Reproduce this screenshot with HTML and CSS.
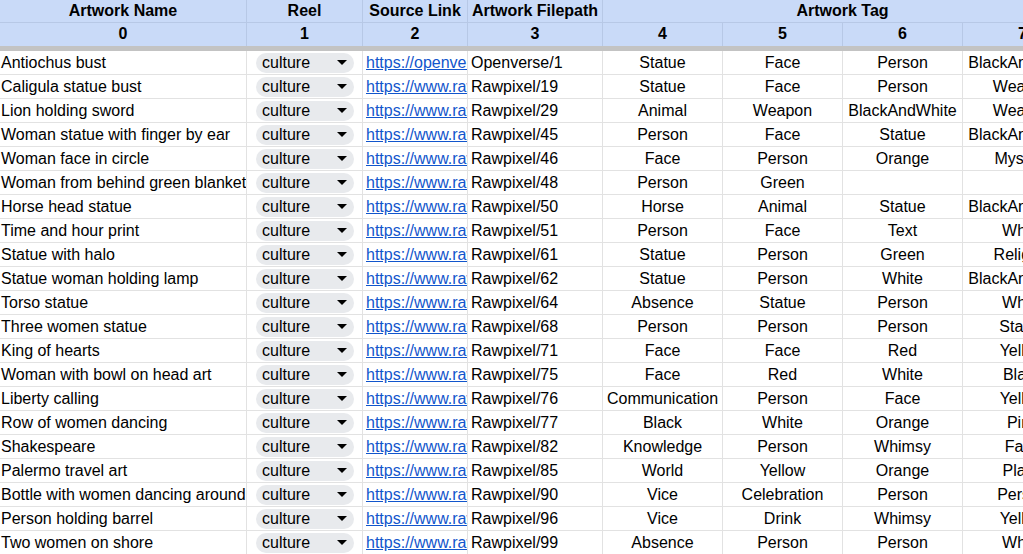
FILE: index.html
```html
<!DOCTYPE html>
<html>
<head>
<meta charset="utf-8">
<link rel="stylesheet" href="styles.css">
</head>
<body>
<div class="sheet">
  <div class="hrow">
    <div class="hc c0">Artwork Name</div>
    <div class="hc c1">Reel</div>
    <div class="hc c2">Source Link</div>
    <div class="hc c3">Artwork Filepath</div>
    <div class="hc ctag">Artwork Tag</div>
  </div>
  <div class="hrow nums">
    <div class="hc c0">0</div>
    <div class="hc c1">1</div>
    <div class="hc c2">2</div>
    <div class="hc c3">3</div>
    <div class="hc ct">4</div>
    <div class="hc ct">5</div>
    <div class="hc ct">6</div>
    <div class="hc ct">7</div>
  </div>
  <div id="body"></div>
</div>
<script src="app.js"></script>
</body>
</html>
```
FILE: app.js
```js
const rows = [
  ["Antiochus bust","https://openverse.org/image/antiochus","Openverse/1","Statue","Face","Person","BlackAndWhite"],
  ["Caligula statue bust","https://www.rawpixel.com/image/19","Rawpixel/19","Statue","Face","Person","Weapon"],
  ["Lion holding sword","https://www.rawpixel.com/image/29","Rawpixel/29","Animal","Weapon","BlackAndWhite","Weapon"],
  ["Woman statue with finger by ear","https://www.rawpixel.com/image/45","Rawpixel/45","Person","Face","Statue","BlackAndWhite"],
  ["Woman face in circle","https://www.rawpixel.com/image/46","Rawpixel/46","Face","Person","Orange","Mystery"],
  ["Woman from behind green blanket","https://www.rawpixel.com/image/48","Rawpixel/48","Person","Green","",""],
  ["Horse head statue","https://www.rawpixel.com/image/50","Rawpixel/50","Horse","Animal","Statue","BlackAndWhite"],
  ["Time and hour print","https://www.rawpixel.com/image/51","Rawpixel/51","Person","Face","Text","White"],
  ["Statue with halo","https://www.rawpixel.com/image/61","Rawpixel/61","Statue","Person","Green","Religion"],
  ["Statue woman holding lamp","https://www.rawpixel.com/image/62","Rawpixel/62","Statue","Person","White","BlackAndWhite"],
  ["Torso statue","https://www.rawpixel.com/image/64","Rawpixel/64","Absence","Statue","Person","White"],
  ["Three women statue","https://www.rawpixel.com/image/68","Rawpixel/68","Person","Person","Person","Statue"],
  ["King of hearts","https://www.rawpixel.com/image/71","Rawpixel/71","Face","Face","Red","Yellow"],
  ["Woman with bowl on head art","https://www.rawpixel.com/image/75","Rawpixel/75","Face","Red","White","Black"],
  ["Liberty calling","https://www.rawpixel.com/image/76","Rawpixel/76","Communication","Person","Face","Yellow"],
  ["Row of women dancing","https://www.rawpixel.com/image/77","Rawpixel/77","Black","White","Orange","Pink"],
  ["Shakespeare","https://www.rawpixel.com/image/82","Rawpixel/82","Knowledge","Person","Whimsy","Face"],
  ["Palermo travel art","https://www.rawpixel.com/image/85","Rawpixel/85","World","Yellow","Orange","Place"],
  ["Bottle with women dancing around","https://www.rawpixel.com/image/90","Rawpixel/90","Vice","Celebration","Person","Person"],
  ["Person holding barrel","https://www.rawpixel.com/image/96","Rawpixel/96","Vice","Drink","Whimsy","Yellow"],
  ["Two women on shore","https://www.rawpixel.com/image/99","Rawpixel/99","Absence","Person","Person","White"]
];
const body = document.getElementById("body");
const arrow = '<svg class="arr" width="10" height="5" viewBox="0 0 10 5"><path d="M0 0H10L5 5Z"/></svg>';
for (const r of rows) {
  const row = document.createElement("div");
  row.className = "row";
  let html = '<div class="c c0">' + r[0] + '</div>';
  html += '<div class="c c1"><span class="chip"><span>culture</span>' + arrow + '</span></div>';
  html += '<div class="c c2"><a href="#">' + r[1] + '</a></div>';
  html += '<div class="c c3">' + r[2] + '</div>';
  for (let i = 3; i < 7; i++) html += '<div class="c ct">' + r[i] + '</div>';
  row.innerHTML = html;
  body.appendChild(row);
}
```
FILE: styles.css
```css
html, body {
  margin: 0;
  padding: 0;
  background: #fff;
  overflow: hidden;
}
body {
  font-family: "Liberation Sans", Arial, sans-serif;
  font-size: 16px;
  color: #000;
}
.sheet {
  width: 1100px;
}
.hrow {
  display: flex;
  background: #c9daf8;
  height: 23px;
  border-bottom: 1px solid #b7c8e6;
  box-sizing: border-box;
}
.hrow.nums {
  height: 28px;
  border-bottom: 5px solid #c3c3c3;
}
.hc {
  box-sizing: border-box;
  border-right: 1px solid #b7c8e6;
  font-weight: bold;
  text-align: center;
  line-height: 21px;
  white-space: nowrap;
  overflow: hidden;
  flex: none;
}
.c0 { width: 247px; }
.c1 { width: 116px; }
.c2 { width: 105px; }
.c3 { width: 135px; }
.ct { width: 120px; }
.ctag { width: 480px; }
.row {
  display: flex;
  height: 24px;
  border-bottom: 1px solid #e2e2e2;
  box-sizing: border-box;
}
.c {
  box-sizing: border-box;
  border-right: 1px solid #e2e2e2;
  flex: none;
  white-space: nowrap;
  overflow: hidden;
  line-height: 23px;
}
.row .c0 { padding-left: 1px; }
.row .c2, .row .c3 { padding-left: 3px; }
.row .ct { text-align: center; }
.row .c1 {
  display: flex;
  align-items: center;
  padding: 0 8px 0 9px;
}
.chip {
  flex: 1;
  height: 20px;
  border-radius: 10px;
  background: #e8eaed;
  display: flex;
  align-items: center;
  justify-content: space-between;
  padding: 0 7px 0 6px;
  line-height: 20px;
}
.arr { fill: #000; display: block; }
a {
  display: block;
  overflow: hidden;
  color: #1155cc;
  text-decoration: underline;
}
```
